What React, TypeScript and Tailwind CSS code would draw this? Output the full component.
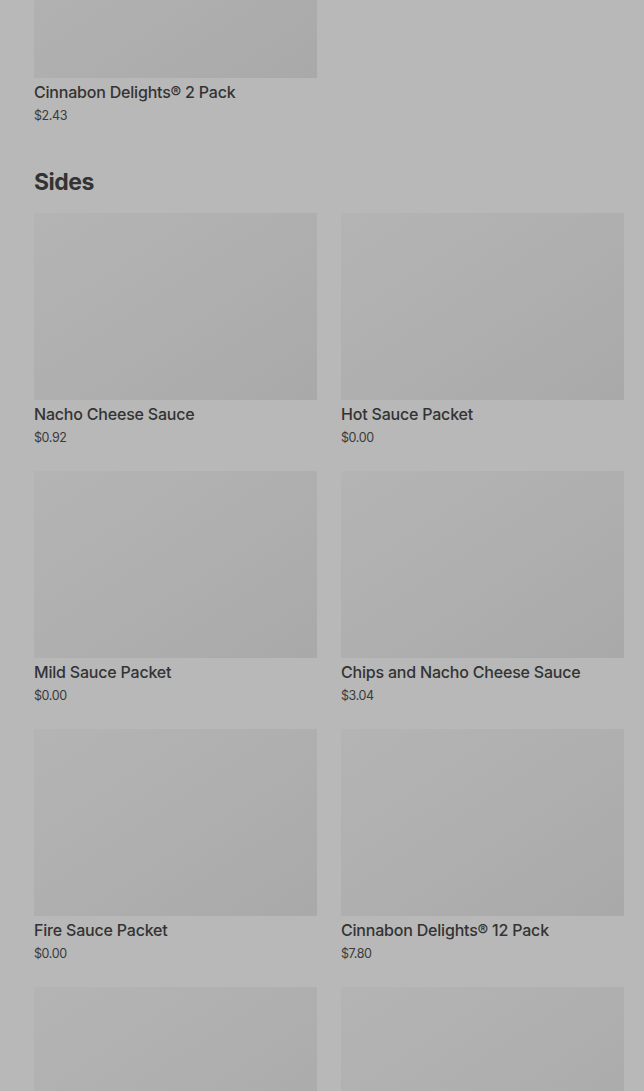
const top = { name: 'Cinnabon Delights® 2 Pack', price: '$2.43' }

const sides = [
  { name: 'Nacho Cheese Sauce', price: '$0.92' },
  { name: 'Hot Sauce Packet', price: '$0.00' },
  { name: 'Mild Sauce Packet', price: '$0.00' },
  { name: 'Chips and Nacho Cheese Sauce', price: '$3.04' },
  { name: 'Fire Sauce Packet', price: '$0.00' },
  { name: 'Cinnabon Delights® 12 Pack', price: '$7.80' },
  { name: '', price: '' },
  { name: '', price: '' },
]

function Item({ name, price }: { name: string; price: string }) {
  return (
    <div className="flex flex-col">
      <div className="h-[187px] w-full bg-gradient-to-br from-[#b4b4b4] via-[#afafaf] to-[#a9a9a9]" />
      {name && (
        <div className="pt-1">
          <div className="text-[16px] leading-5 font-medium text-[#333333] tracking-[-0.2px]">{name}</div>
          <div className="mt-[5px] text-[12.5px] leading-[18px] text-[#3a3a3a] tracking-[-0.4px]">{price}</div>
        </div>
      )}
    </div>
  )
}

export default function App() {
  return (
    <div
      className="h-[1091px] overflow-hidden bg-[#b8b8b8] pl-[34px] pr-5"
      style={{ fontFamily: 'Inter, "Noto Sans", sans-serif' }}
    >
      <div className="-mt-[109px] grid grid-cols-2 gap-x-6">
        <Item {...top} />
      </div>
      <h2 className="mt-[43px] text-[23px] leading-7 font-bold text-[#333333] tracking-[-0.5px]">Sides</h2>
      <div className="mt-[17px] grid grid-cols-2 gap-x-6 gap-y-[24px]">
        {sides.map((s, i) => (
          <Item key={i} {...s} />
        ))}
      </div>
    </div>
  )
}
